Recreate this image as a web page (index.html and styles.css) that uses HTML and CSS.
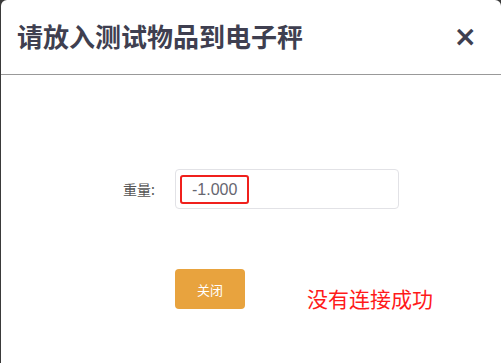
FILE: index.html
```html
<!DOCTYPE html>
<html lang="zh-CN">
<head>
  <meta charset="UTF-8">
  <meta name="viewport" content="width=device-width, initial-scale=1.0">
  <title>电子秤</title>
  <link rel="stylesheet" href="styles.css">
</head>
<body>
  <div class="dialog">
    <div class="dialog-head">
      <h3 class="dialog-title">请放入测试物品到电子秤</h3>
      <span class="dialog-close">&times;</span>
    </div>
    <div class="dialog-body">
      <div class="form-row">
        <label class="form-label">重量:</label>
        <div class="form-input">
          <span class="weight-box">-1.000</span>
        </div>
      </div>
      <div class="action-row">
        <button class="btn-close">关闭</button>
        <span class="msg">没有连接成功</span>
      </div>
    </div>
  </div>
</body>
</html>
```

FILE: styles.css
```css
:root {
  --title: #3f3f50;
  --text: #555;
  --divider: #999;
  --warn: #e8a33e;
}
*, *::before, *::after {
  box-sizing: border-box;
}
body, h3 {
  margin: 0;
  padding: 0;
}
body {
  font-family: "Liberation Sans", "Noto Sans CJK SC", sans-serif;
  background: #3a3a3a;
  color: var(--text);
  overflow: hidden;
}
.dialog {
  margin-left: 1px;
  width: 500px;
  height: 363px;
  background: #fff;
  border-radius: 6px 6px 0 0;
}
.dialog-head {
  height: 75px;
  border-bottom: 1px solid var(--divider);
  display: flex;
  align-items: center;
  justify-content: space-between;
  padding: 0 24px 0 16px;
}
.dialog-title {
  font-family: "Noto Sans CJK SC", sans-serif;
  font-size: 26px;
  font-weight: bold;
  color: var(--title);
  margin-top: -3px;
}
.dialog-close {
  font-family: "DejaVu Sans", sans-serif;
  font-size: 28px;
  font-weight: bold;
  color: var(--title);
  line-height: 1;
  margin-top: 0;
}
.dialog-body {
  padding-top: 94px;
}
.form-row {
  display: flex;
  align-items: center;
  gap: 20px;
}
.form-label {
  width: 154px;
  text-align: right;
  font-size: 14px;
  font-family: "Noto Sans CJK SC", sans-serif;
  color: var(--text);
}
.form-input {
  width: 224px;
  height: 40px;
  border: 1px solid #e2e2e6;
  border-radius: 4px;
  padding: 5px 0 0 4px;
}
.weight-box {
  display: inline-block;
  width: 69px;
  height: 29px;
  border: 2px solid #f0201c;
  border-radius: 3px;
  padding-left: 10px;
  font-size: 16px;
  line-height: 25px;
  color: #666670;
}
.action-row {
  display: flex;
  align-items: flex-start;
  margin: 60px 0 0 174px;
}
.btn-close {
  width: 70px;
  height: 40px;
  border: none;
  border-radius: 4px;
  background: var(--warn);
  color: #fff;
  font-family: "Noto Sans CJK SC", sans-serif;
  font-size: 13px;
}
.msg {
  margin: 16px 0 0 62px;
  font-family: "Noto Sans CJK SC", sans-serif;
  font-size: 21px;
  line-height: 26px;
  color: #ff1a1a;
}
```
